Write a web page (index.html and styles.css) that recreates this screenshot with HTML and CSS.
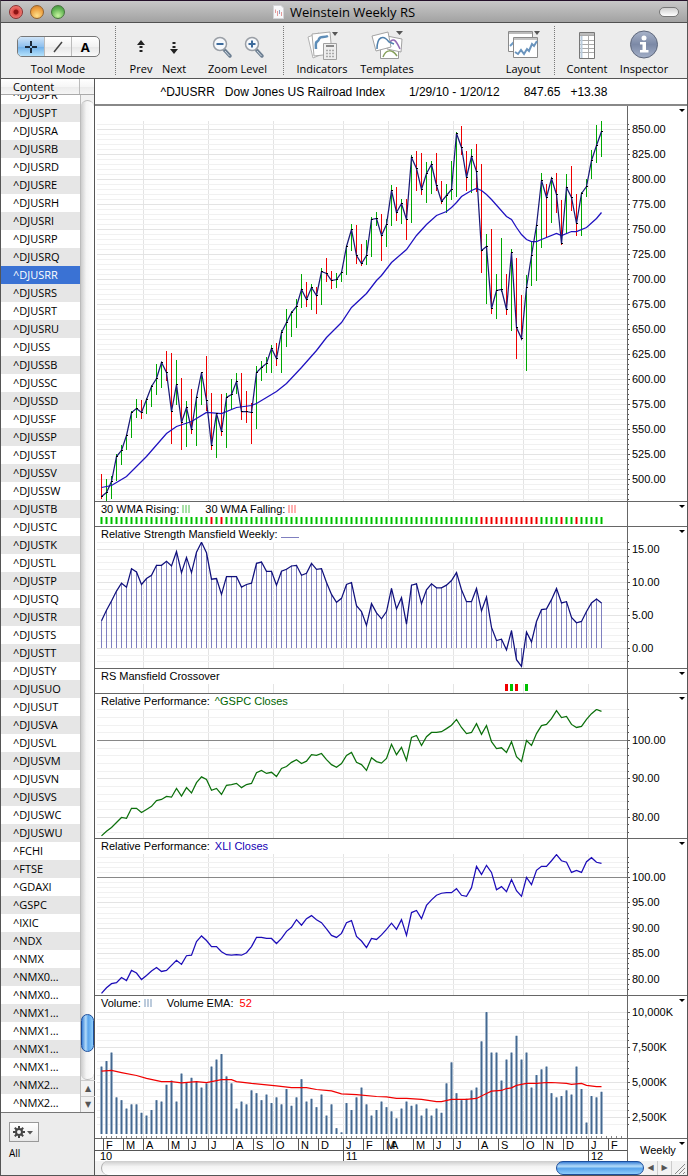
FILE: index.html
```html
<!DOCTYPE html>
<html lang="en">
  <head>
    <meta charset="UTF-8" />
    <meta name="viewport" content="width=device-width, initial-scale=1.0" />
    <title>Weinstein Weekly RS</title>
    <link rel="stylesheet" href="styles.css">
  </head>
  <body>
    <div class="window">
      <header class="titlebar">
        <div class="lights">
          <button class="light close" aria-label="Close"></button>
          <button class="light minimize" aria-label="Minimize"></button>
          <button class="light maximize" aria-label="Zoom window"></button>
        </div>
        <h1>
          <svg width="11" height="14" viewBox="0 0 11 14">
            <path d="M.5 .5H8L10.500 3V13.500H.5Z" fill="#f8f8fa" stroke="#d4d4d8" />
            <path d="M2.500 4.500V8M4.500 6V11M8.500 7V11" stroke="#e39a9a" />
            <path d="M6.500 5V9" stroke="#8e9ec4" />
          </svg>
          Weinstein Weekly RS
        </h1>
        <button class="pill" aria-label="Toggle toolbar"></button>
      </header>

      <div class="toolbar">
        <div class="tool mode">
          <div class="segments">
            <button class="active" aria-label="Crosshair">
              <svg width="12" height="12" viewBox="0 0 12 12"><path d="M6 0V5M6 7V12M0 6H5M7 6H12" stroke="#1c2a3a" stroke-width="2" /></svg>
            </button>
            <button aria-label="Line">
              <svg width="12" height="12" viewBox="0 0 12 12"><path d="M2 11L10 1" stroke="#444" stroke-width="1.500" /></svg>
            </button>
            <button>A</button>
          </div>
          <span>Tool Mode</span>
        </div>
        <div class="divider"></div>
        <button class="tool small prev">
          <svg width="20" height="28" viewBox="0 0 20 28"><path d="M6 11L10 6L14 11ZM8.500 12H11.500V14H8.500ZM8.500 16H11.500V18H8.500Z" fill="#222" /></svg>
          <span>Prev</span>
        </button>
        <button class="tool small next">
          <svg width="20" height="28" viewBox="0 0 20 28"><path d="M6 15L10 20L14 15ZM8.500 12H11.500V14H8.500ZM8.500 8H11.500V10H8.500Z" fill="#222" /></svg>
          <span>Next</span>
        </button>
        <div class="tool small zoom">
          <div class="zoom-buttons">
            <button aria-label="Zoom out">
              <svg width="22" height="28" viewBox="0 0 22 28">
                <path d="M13.500 16L19 22" stroke="#6d7f92" stroke-width="3.500" stroke-linecap="round" />
                <path d="M14 17L18.500 22" stroke="#cfd9e2" />
                <circle cx="9" cy="10" r="6.500" fill="#f7f9fc" stroke="#9a9fa6" stroke-width="1.500" />
                <path d="M5.500 10H12.500" stroke="#3d6b9c" stroke-width="2" />
              </svg>
            </button>
            <button aria-label="Zoom in">
              <svg width="22" height="28" viewBox="0 0 22 28">
                <path d="M13.500 16L19 22" stroke="#6d7f92" stroke-width="3.500" stroke-linecap="round" />
                <path d="M14 17L18.500 22" stroke="#cfd9e2" />
                <circle cx="9" cy="10" r="6.500" fill="#f7f9fc" stroke="#9a9fa6" stroke-width="1.500" />
                <path d="M5.500 10H12.500M9 6.500V13.500" stroke="#3d6b9c" stroke-width="2" />
              </svg>
            </button>
          </div>
          <span>Zoom Level</span>
        </div>
        <div class="divider"></div>
        <button class="tool indicators">
          <svg width="34" height="32" viewBox="0 0 34 32">
            <path d="M3 8L14 4L20 24L8 29Z" fill="#fff" stroke="#b2b2b2" />
            <path d="M7 5L25 3L27 25L9 27Z" fill="#fdfdfd" stroke="#a8a8a8" />
            <path d="M11 20C10 9 13 15 14 10C15 7 19 9 23 7" fill="none" stroke="#5d8db8" stroke-width="2.500" />
            <path d="M18.500 14.500H31.500V30.500H18.500Z" fill="#eee" stroke="#a0a0a0" />
            <path d="M21 17H29" stroke="#888" stroke-width="2" />
            <path d="M21 21.500H29M21 24.500H29M21 27.500H29" stroke="#aaa" stroke-width="1.500" stroke-dasharray="2 1" />
            <path d="M27 3H33L30 7Z" fill="#555" />
          </svg>
          <span>Indicators</span>
        </button>
        <button class="tool templates">
          <svg width="34" height="32" viewBox="0 0 34 32">
            <path d="M10.500 16.500H28.500V29.500H10.500Z" fill="#fff" stroke="#999" />
            <path d="M13 28C16 20 22 20 27 27" fill="none" stroke="#86a05a" stroke-width="1.500" />
            <path d="M17 7L32 10L31 23L17 20Z" fill="#fff" stroke="#a3a3a3" />
            <path d="M18 16C23 7 26 11 30 20" fill="none" stroke="#9268b4" stroke-width="1.500" />
            <path d="M2 7L18 3L21 18L6 22Z" fill="#fff" stroke="#a3a3a3" />
            <path d="M7 20C7 8 13 5 19 13L24 15" fill="none" stroke="#4f80ad" stroke-width="1.500" />
            <path d="M26 2H33L29.500 6Z" fill="#555" />
          </svg>
          <span>Templates</span>
        </button>
        <button class="tool layout">
          <svg width="34" height="32" viewBox="0 0 34 32">
            <path d="M2.500 2.500H26.500V22.500H2.500Z" fill="#fff" stroke="#8a8a8a" />
            <path d="M3 4H26" stroke="#bbb" stroke-width="2" />
            <path d="M4 17L8 13" stroke="#6d9bc6" stroke-width="2" />
            <path d="M7.500 8.500H31.500V28.500H7.500Z" fill="#fff" stroke="#8a8a8a" />
            <path d="M8 10H31" stroke="#c4c4c4" stroke-width="2" />
            <path d="M9 23L12 25L15 21L18 25L21 20L23 22L26 15L28 17L31 12" fill="none" stroke="#6a94bd" stroke-width="2" />
            <path d="M28 2H34L31 6Z" fill="#555" />
          </svg>
          <span>Layout</span>
        </button>
        <div class="divider"></div>
        <button class="tool content">
          <svg width="16" height="32" viewBox="0 0 16 32">
            <path d="M.5 3.500H15.500V29.500H.5Z" fill="#fff" stroke="#777" />
            <path d="M1 5H15" stroke="#bbb" stroke-width="2" />
            <path d="M1 6.500H15M1 11.500H15M1 15.500H15M1 19.500H15M1 23.500H15M9.500 7V29" stroke="#aaa" />
            <path d="M2.500 7V29" stroke="#bcd" stroke-width="2" />
          </svg>
          <span>Content</span>
        </button>
        <button class="tool inspector">
          <svg width="32" height="32" viewBox="0 0 32 32">
            <defs>
              <linearGradient id="info" x1="0" y1="0" x2="0" y2="1">
                <stop offset="0" stop-color="#a9b4ca" />
                <stop offset=".5" stop-color="#7c89a6" />
                <stop offset="1" stop-color="#a4b0c8" />
              </linearGradient>
            </defs>
            <circle cx="16" cy="15.500" r="13.500" fill="url(#info)" stroke="#5f687c" />
            <circle cx="16" cy="9" r="2.500" fill="#fff" />
            <path d="M12 13H18V21H20.500V23.500H12V21H14.500V15.500H12Z" fill="#fff" />
          </svg>
          <span>Inspector</span>
        </button>
      </div>

      <div class="main">
        <aside class="sidebar">
          <div class="sidebar-head"><span>Content</span></div>
          <div class="sidebar-body">
            <ul class="symbols" id="symbols"></ul>
            <div class="vscroll">
              <div class="vtrack"><div class="vthumb"></div></div>
              <button class="arrow" aria-label="Scroll up">▲</button>
              <button class="arrow" aria-label="Scroll down">▼</button>
            </div>
          </div>
          <div class="sidebar-foot">
            <button class="gear" aria-label="Actions">
              <svg width="22" height="12" viewBox="0 0 22 12">
                <circle cx="6" cy="6" r="3" fill="none" stroke="#444" stroke-width="2" />
                <path d="M6 0V2.500M6 9.500V12M0 6H2.500M9.500 6H12M1.800 1.800L3.500 3.500M8.500 8.500L10.200 10.200M1.800 10.200L3.500 8.500M8.500 3.500L10.200 1.800" stroke="#444" stroke-width="2" />
                <path d="M14 5H20L17 8.500Z" fill="#555" />
              </svg>
            </button>
            <span>All</span>
          </div>
        </aside>

        <section class="charts">
          <div class="quote">
            <span>^DJUSRR</span>
            <span>Dow Jones US Railroad Index</span>
            <span class="apart">1/29/10 - 1/20/12</span>
            <span class="apart">847.65</span>
            <span>+13.38</span>
          </div>

          <div class="panel">
            <div class="plot">
              <div class="label"></div>
              <svg id="price" height="380"></svg>
            </div>
            <div class="axis"><svg id="price-axis"></svg><button class="menu" aria-label="Price options"></button></div>
          </div>

          <div class="panel">
            <div class="plot">
              <div class="label">
                <span>30 WMA Rising: <i class="bars green"></i></span>
                <span>30 WMA Falling: <i class="bars red"></i></span>
              </div>
              <svg id="trend" height="9"></svg>
            </div>
            <div class="axis"><button class="menu" aria-label="WMA options"></button></div>
          </div>

          <div class="panel">
            <div class="plot">
              <div class="label"><span>Relative Strength Mansfield Weekly: <i class="rule"></i></span></div>
              <svg id="strength" height="126"></svg>
            </div>
            <div class="axis"><svg id="strength-axis"></svg><button class="menu" aria-label="Relative strength options"></button></div>
          </div>

          <div class="panel">
            <div class="plot">
              <div class="label">RS Mansfield Crossover</div>
              <svg id="crossover" height="9"></svg>
            </div>
            <div class="axis"><button class="menu" aria-label="Crossover options"></button></div>
          </div>

          <div class="panel">
            <div class="plot">
              <div class="label tight"><span>Relative Performance:</span> <span class="gspc">^GSPC Closes</span></div>
              <svg id="gspc" height="129"></svg>
            </div>
            <div class="axis"><svg id="gspc-axis"></svg><button class="menu" aria-label="GSPC options"></button></div>
          </div>

          <div class="panel">
            <div class="plot">
              <div class="label tight"><span>Relative Performance:</span> <span class="xli">XLI Closes</span></div>
              <svg id="xli" height="141"></svg>
            </div>
            <div class="axis"><svg id="xli-axis"></svg><button class="menu" aria-label="XLI options"></button></div>
          </div>

          <div class="panel">
            <div class="plot">
              <div class="label">
                <span>Volume: <i class="bars blue"></i></span>
                <span>Volume EMA: <b>52</b></span>
              </div>
              <svg id="volume" height="127"></svg>
            </div>
            <div class="axis"><svg id="volume-axis"></svg><button class="menu" aria-label="Volume options"></button></div>
          </div>

          <div class="panel dates">
            <div class="plot"><svg id="dates" height="22"></svg></div>
            <div class="axis"><span class="period">Weekly</span><button class="menu" aria-label="Period"></button></div>
          </div>

          <div class="hscroll">
            <div class="htrack"><div class="hthumb"></div></div>
            <button class="arrow" aria-label="Scroll left">◀</button>
            <button class="arrow" aria-label="Scroll right">▶</button>
            <svg width="15" height="14" viewBox="0 0 15 14"><path d="M3 13L13 3M7 13L13 7M11 13L13 11" stroke="#888" /></svg>
          </div>
        </section>
      </div>
    </div>
    <script src="charts.js"></script>
  </body>
</html>
```
FILE: styles.css
```css
* {
  box-sizing: border-box;
}
body {
  margin: 0;
  font-family: 'Lucida Grande', 'Open Sans', sans-serif;
  font-size: 11px;
  color: #000;
}
button {
  margin: 0;
  padding: 0;
  border: none;
  background: none;
  font: inherit;
  color: inherit;
}
svg {
  display: block;
}
.window {
  display: flex;
  flex-direction: column;
  min-height: 100vh;
  border: 1px solid #555;
  border-top-color: #24102a;
}

/* title bar */
.titlebar {
  display: grid;
  grid-template-columns: 1fr auto 1fr;
  align-items: center;
  height: 22px;
  padding: 0 8px;
  background: linear-gradient(#c8c8c8, #a2a2a2);
  border-bottom: 1px solid #515151;
}
.titlebar h1 {
  display: flex;
  align-items: center;
  gap: 6px;
  margin: 0;
  font-size: 13px;
  line-height: 16px;
  font-weight: normal;
}
.lights {
  display: flex;
  gap: 7px;
}
.light {
  width: 14px;
  height: 14px;
  border-radius: 50%;
  border: 1px solid #777;
}
.close {
  background: radial-gradient(circle at 50% 50%, #8c1414 2px, #e0504c 3px, #f59a90);
  border-color: #8a3030;
}
.minimize {
  background: radial-gradient(circle at 50% 80%, #ffe08a, #eda040 60%, #c9772c);
  border-color: #93622d;
}
.maximize {
  background: radial-gradient(circle at 50% 80%, #c8f5a0, #62b454 60%, #3f8c3c);
  border-color: #46743d;
}
.pill {
  justify-self: end;
  width: 20px;
  height: 10px;
  border: 1px solid #777;
  border-radius: 5px;
  background: linear-gradient(#cfcfcf, #fff);
}

/* toolbar */
.toolbar {
  display: flex;
  height: 56px;
  padding-right: 15px;
  background: #ececec;
  border-bottom: 1px solid #555;
}
.tool {
  display: flex;
  flex-direction: column;
  align-items: center;
  height: 54px;
  padding-top: 6px;
}
.small {
  padding-top: 11px;
}
.tool span {
  margin-top: auto;
  line-height: 16px;
  white-space: nowrap;
}
.small svg {
  margin-bottom: -3px;
}
.divider {
  width: 1px;
  margin: 3px 0;
  border-left: 1px dotted #777;
}
.mode {
  width: 114px;
}
.segments {
  display: flex;
  width: 83px;
  height: 21px;
  margin-top: 7px;
  border: 1px solid #777;
  border-radius: 5px;
  background: linear-gradient(#fff, #f2f2f2 50%, #e6e6e6 51%, #fafafa);
  overflow: hidden;
}
.segments button {
  flex: 1;
  display: flex;
  align-items: center;
  justify-content: center;
  font-size: 13px;
  font-weight: bold;
}
.segments button + button {
  border-left: 1px solid #bbb;
}
.segments .active {
  background: linear-gradient(#cfe4f8, #8fc0ee 50%, #6eaee8 51%, #b5e2fb);
}
.prev {
  width: 30px;
  margin-left: 10px;
}
.next {
  width: 32px;
  margin-left: 2px;
}
.zoom {
  width: 71px;
  margin: 0 10px 0 12px;
}
.zoom-buttons {
  display: flex;
  gap: 10px;
}
.indicators,
.templates {
  width: 60px;
  margin-left: 8px;
}
.templates {
  margin-left: 5px;
}
.layout {
  width: 46px;
  margin: 0 8px 0 auto;
}
.content {
  width: 50px;
  margin-left: 7px;
}
.inspector {
  width: 56px;
  margin-left: 4px;
}

/* symbol list */
.main {
  flex: 1;
  display: flex;
}
.sidebar {
  flex: none;
  display: flex;
  flex-direction: column;
  width: 94px;
  background: #ececec;
  border-right: 1px solid #555;
}
.sidebar-head {
  display: flex;
  height: 16px;
  line-height: 15px;
  padding-left: 12px;
  border-bottom: 1px solid #aaa;
  background: linear-gradient(#fff, #f6f6f6 50%, #ebebeb 51%, #f5f5f5);
}
.sidebar-head span {
  width: 67px;
  border-right: 1px solid #bbb;
}
.sidebar-body {
  display: flex;
  border-bottom: 1px solid #777;
}
.symbols {
  flex: 1;
  margin: 0;
  padding: 0;
  list-style: none;
  overflow: hidden;
}
.symbols li {
  height: 18px;
  padding-left: 12px;
  line-height: 18px;
  background: #fff;
}
.symbols li:first-child {
  margin-top: -9px;
}
.symbols li:nth-child(even) {
  background: #e6e6e6;
}
.symbols li.selected {
  background: #3a72d4;
  color: #fff;
}
.vscroll {
  display: flex;
  flex-direction: column;
  width: 14px;
  background: #f2f2f2;
  border-left: 1px solid #bbb;
}
.vtrack {
  flex: 1;
  display: flex;
  flex-direction: column;
  justify-content: flex-end;
  margin-top: 5px;
  padding-bottom: 27px;
  border: 1px solid #bbb;
  border-width: 1px 0;
  border-radius: 7px;
  background: linear-gradient(90deg, #ccc, #f4f4f4 40%, #fff);
}
.vthumb {
  height: 38px;
  border: 1px solid #1c4e9c;
  border-radius: 7px;
  background: linear-gradient(90deg, #3c82d8, #b4dcfa 35%, #5aa4ec 55%, #8ccdfb);
}
.arrow {
  width: 14px;
  height: 16px;
  border-top: 1px solid #ccc;
  font-family: 'DejaVu Sans', sans-serif;
  font-size: 8px;
  line-height: 14px;
  color: #555;
}
.sidebar-foot {
  display: flex;
  flex-direction: column;
  align-items: flex-start;
  padding: 9px 8px;
  gap: 3px;
}
.sidebar-foot span {
  font-size: 10px;
  line-height: 16px;
}
.gear {
  display: flex;
  align-items: center;
  justify-content: center;
  width: 30px;
  height: 20px;
  border: 1px solid #999;
  background: linear-gradient(#fff, #e8e8e8);
}

/* charts */
.charts {
  flex: 1;
  min-width: 0;
  background: #fff;
  font-family: 'Liberation Sans', Arial, sans-serif;
}
.quote {
  display: flex;
  justify-content: center;
  gap: 10px;
  height: 27px;
  padding-right: 14px;
  border-bottom: 2px solid #888;
  font-size: 12px;
  line-height: 26px;
  white-space: nowrap;
}
.apart {
  margin-left: 14px;
}
.panel {
  display: flex;
  border-bottom: 1px solid #666;
}
.plot {
  flex: 1;
  min-width: 0;
}
.plot svg {
  width: 100%;
}
.label {
  display: flex;
  gap: 15px;
  height: 15px;
  padding-left: 6px;
  line-height: 15px;
  white-space: nowrap;
}
.label.tight {
  gap: 5px;
}
.label b {
  margin-left: 3px;
  font-weight: normal;
  color: #f00;
}
.gspc {
  color: #006400;
}
.xli {
  color: #1400b4;
}
.bars {
  display: inline-block;
  width: 8px;
  height: 8px;
  background: repeating-linear-gradient(90deg, currentColor 0 2px, transparent 2px 3px);
}
.green {
  color: #a8e0a8;
}
.red {
  color: #ffb0b0;
}
.blue {
  color: #bccbdc;
}
.rule {
  display: inline-block;
  width: 18px;
  border-bottom: 1px solid #7f7fbf;
}
.axis {
  position: relative;
  flex: none;
  width: 60px;
  border-left: 1px solid #666;
}
/* takes the height of the plot beside it */
.axis svg {
  width: 59px;
  height: 0;
  min-height: 100%;
}
.axis svg,
.plot svg {
  font-size: 11px;
}
.menu {
  position: absolute;
  top: 3px;
  right: 2px;
  border: 3px solid transparent;
  border-top-color: #000;
  border-bottom: none;
}
.dates {
  border-bottom: none;
}
.period {
  display: block;
  padding-left: 12px;
  line-height: 22px;
}
.hscroll {
  display: flex;
  height: 14px;
  background: #f2f2f2;
}
.htrack {
  flex: 1;
  display: flex;
  justify-content: flex-end;
  margin-left: 6px;
  border-left: 1px solid #aaa;
  border-radius: 7px;
  background: linear-gradient(#ccc, #f4f4f4 40%, #fff);
}
.hthumb {
  width: 88px;
  border: 1px solid #1c4e9c;
  border-radius: 7px;
  background: linear-gradient(#3c82d8, #b4dcfa 35%, #5aa4ec 55%, #8ccdfb);
}
.hscroll .arrow {
  height: 14px;
  border-top: none;
  border-right: 1px solid #ccc;
}
```
FILE: charts.js
```js
const symbols = ['^DJUSPR', '^DJUSPT', '^DJUSRA', '^DJUSRB', '^DJUSRD', '^DJUSRE', '^DJUSRH', '^DJUSRI', '^DJUSRP', '^DJUSRQ', '^DJUSRR',
  '^DJUSRS', '^DJUSRT', '^DJUSRU', '^DJUSS', '^DJUSSB', '^DJUSSC', '^DJUSSD', '^DJUSSF', '^DJUSSP', '^DJUSST', '^DJUSSV', '^DJUSSW',
  '^DJUSTB', '^DJUSTC', '^DJUSTK', '^DJUSTL', '^DJUSTP', '^DJUSTQ', '^DJUSTR', '^DJUSTS', '^DJUSTT', '^DJUSTY', '^DJUSUO', '^DJUSUT',
  '^DJUSVA', '^DJUSVL', '^DJUSVM', '^DJUSVN', '^DJUSVS', '^DJUSWC', '^DJUSWU', '^FCHI', '^FTSE', '^GDAXI', '^GSPC', '^IXIC', '^NDX',
  '^NMX', '^NMX0…', '^NMX0…', '^NMX1…', '^NMX1…', '^NMX1…', '^NMX1…', '^NMX2…', '^NMX2…'];

// close, high, low, r = down week / g = up week
const prices = `483 505 481 r,487 500 479 g,498 503 481 g,523 525 499 g,529 534 515 g,544 545 530 g,567 568 542 g,571 580 562 g,567 579 561 r,580 581 566 g,
593 594 573 g,601 615 585 g,617 617 592 g,607 628 599 r,568 626 536 r,595 619 575 g,557 601 530 r,572 578 533 g,550 590 546 r,582 583 534 g,
607 607 575 g,579 623 569 r,534 586 530 r,566 566 522 g,548 585 544 r,582 586 532 g,585 600 570 g,598 606 586 g,568 606 560 r,568 588 557 r,
567 576 536 r,607 613 551 g,612 618 599 g,616 622 607 g,631 634 607 g,621 636 614 r,647 649 607 g,657 670 633 g,667 668 643 g,673 680 652 g,
690 705 672 g,680 697 673 r,692 695 670 g,684 692 666 r,708 711 675 g,706 721 698 r,699 708 691 r,700 706 692 g,707 708 698 g,733 734 705 g,
750 755 729 g,724 754 716 r,716 735 714 r,724 739 715 g,760 762 723 g,761 767 754 g,744 765 719 r,755 760 733 g,789 794 754 g,767 792 759 r,
776 780 756 g,760 780 740 r,822 824 757 g,811 828 789 r,790 826 785 r,806 817 777 g,815 818 786 g,794 826 789 r,778 798 776 r,784 795 767 g,
790 818 780 g,846 847 783 g,832 853 825 r,802 828 789 r,823 830 787 g,808 835 788 r,729 815 707 r,733 745 676 g,671 750 666 r,689 705 661 g,
690 741 688 g,670 705 665 r,727 730 649 g,652 721 621 r,641 684 640 r,692 704 609 g,724 737 694 g,754 755 699 g,799 806 732 g,782 795 743 r,
801 802 757 g,785 806 767 r,736 779 735 r,792 805 746 g,782 813 769 r,756 785 744 r,786 787 744 g,793 800 783 g,819 829 801 g,834 854 817 g,848 858 823 g`
  .split(',').map((row) => row.trim().split(' '));

// [week, value]
const average = [[0, 492], [2, 494], [5, 503], [9, 523], [13, 546], [15, 553], [18, 558], [21, 567], [24, 566], [26, 570], [27, 572], [30, 574],
  [31, 576], [33, 582], [35, 588], [37, 596], [40, 612], [43, 629], [45, 642], [48, 657], [50, 672], [53, 686], [55, 699], [56, 704], [58, 717],
  [61, 730], [63, 744], [65, 755], [67, 764], [69, 768], [70, 772], [71, 777], [72, 783], [74, 789], [75, 791], [76, 789], [77, 785], [78, 780],
  [81, 763], [82, 760], [83, 752], [84, 745], [85, 740], [86, 738], [87, 738], [88, 740], [91, 746], [92, 744], [94, 748], [95, 748], [97, 752],
  [99, 761], [100, 767]];

const strength = [4.2, 5.8, 7.2, 8.7, 9.9, 9.3, 12.1, 11.6, 9.7, 10.6, 11.1, 12.6, 12.6, 13.2, 12.5, 14.7, 11.5, 13.8, 11.5, 14.6,
  16.1, 14.5, 10.5, 10.6, 8.2, 10.9, 10.9, 10.9, 9.3, 9.7, 9.9, 12.9, 13.1, 11.7, 11.7, 9.6, 11.7, 12, 12.5, 12.6,
  11.1, 11.4, 12.9, 12, 12.1, 10, 8.2, 7, 7.6, 9.7, 10, 6.5, 5.6, 3.5, 6.8, 5.4, 4.5, 5.6, 9.1, 6,
  7.7, 3.7, 9.6, 9.8, 6.8, 8.9, 9.8, 9.2, 9.2, 9.6, 10.3, 11.5, 8.9, 7.1, 7.1, 9.1, 5.7, 7.8, 3.2, 1.2,
  1.4, -0.2, 2.7, -1.7, -2.7, 2.5, 1, 4.1, 5.9, 6, 7.4, 9.1, 6.9, 7.1, 4.7, 3.9, 4.1, 5.6, 6.9, 7.5, 6.9];

const gspc = [75.1, 76.3, 77.3, 78.6, 79.9, 79.7, 82.3, 82.3, 81.2, 82, 82.8, 84.3, 84.6, 85.4, 85.2, 87.5, 85.5, 87.7, 86.3, 89,
  90.5, 89.8, 87, 87.5, 85.9, 88.3, 88.5, 88.8, 87.7, 88.5, 88.8, 91.6, 92.2, 91.4, 91.7, 90.6, 92.7, 93.2, 94.3, 95,
  94, 94.6, 96.3, 96.1, 96.6, 95, 93.7, 93, 94, 96.1, 96.9, 94.3, 93.7, 92.2, 95.5, 94.5, 94.1, 95.3, 99, 96.3,
  98.2, 94.8, 100.8, 101.3, 98.7, 101, 102.1, 102.1, 102.3, 103.1, 104, 105.5, 103.4, 101.8, 102.1, 104.4, 101.6, 103.9, 99.7, 97.9,
  98.1, 96.9, 99.7, 95.8, 94.5, 100, 98.7, 101.8, 103.9, 104.2, 105.7, 107.8, 106, 106.3, 104.2, 103.4, 103.7, 105.5, 107, 108.1, 107.6];

const xli = [77.2, 78.3, 79.1, 79.3, 80.3, 79.7, 81.7, 81.2, 79.9, 80.7, 81.6, 82.3, 81.5, 81.7, 82.7, 83.7, 82.9, 84.6, 84.7, 87.4,
  88.5, 87.6, 86.4, 86.4, 85.4, 84.8, 84.7, 84.8, 84.7, 85.2, 86.4, 88.2, 88.2, 88, 88, 87, 88, 89.4, 90.2, 91.7,
  90.6, 91.9, 92.5, 91.7, 91.1, 89.9, 88.6, 88.2, 89, 91.1, 91.5, 88.4, 87.5, 86.2, 88, 87.8, 88.7, 89.8, 91, 89.8,
  91.7, 88.6, 93.1, 93.5, 91.9, 94.5, 95.6, 96.5, 96.9, 97, 97, 97.8, 96.5, 96.3, 98, 102.2, 100.6, 102.4, 101, 97.6,
  98.2, 97.2, 99.6, 97.4, 96.3, 100, 98.6, 101.4, 102.2, 102.2, 103.3, 104.5, 103.3, 103, 101, 101.4, 101, 103.1, 103.9, 103, 102.8];

// millions
const volume = [6.1, 6.5, 7.1, 3.9, 3.7, 3.1, 3.4, 3.4, 2.8, 2.6, 3, 3.7, 3.6, 4.8, 5.1, 3.6, 5.6, 5, 5.3, 5,
  4.6, 4.9, 6.1, 6.6, 7, 5.4, 4.9, 3.1, 3.6, 3.4, 4.4, 4.2, 3.7, 4.1, 3.5, 3.9, 3.4, 4.5, 3.3, 3.9,
  5.2, 3.6, 3.8, 3.2, 4.1, 2.6, 3.4, 1.7, 1.4, 3.5, 3, 3.9, 4.6, 3.4, 2.6, 3, 3.6, 3.2, 2.9, 2.4,
  3.1, 3.6, 3.3, 3.4, 2.6, 3.1, 2.6, 3.1, 2.8, 4.9, 6.4, 4.2, 3.7, 3.8, 4.4, 4.6, 7.9, 10, 7.1, 7.1,
  5.1, 6.6, 7.1, 8.3, 6.6, 7.1, 4.6, 5.5, 5.9, 6.1, 4.2, 3.9, 4, 4.4, 4.1, 6.1, 4.5, 2.1, 4, 3.9, 4.3];
const volumeAverage = [[0, 5.81], [2, 5.86], [4, 5.71], [7, 5.5], [9, 5.29], [12, 5.07], [14, 5.07], [16, 4.98], [19, 5.07], [21, 5], [24, 5.21],
  [26, 5.21], [27, 5.07], [30, 4.93], [35, 4.76], [38, 4.64], [41, 4.64], [43, 4.5], [46, 4.4], [48, 4.19], [51, 4.14], [55, 4], [57, 3.98],
  [59, 3.86], [61, 3.86], [64, 3.79], [67, 3.64], [68, 3.64], [70, 3.79], [73, 3.79], [75, 3.86], [77, 4.21], [78, 4.38], [80, 4.43], [81, 4.57],
  [82, 4.62], [83, 4.79], [85, 4.93], [87, 4.93], [89, 5], [90, 5], [93, 4.93], [94, 4.86], [96, 4.93], [97, 4.79], [99, 4.71], [100, 4.71]];

const falling = [22, 24, 76, 77, 78, 79, 80, 81, 82, 83, 84, 85, 86, 87, 92, 95];
const crossings = [[81, 'r'], [82, 'g'], [83, 'r'], [85, 'g']];

const monthNames = 'FMAMJJASONDJFMAMJJASONDJF';
const monthWeeks = [0, 4, 8, 13, 17, 21, 26, 30, 34, 39, 43, 48, 52, 56, 57, 62, 66, 70, 75, 79, 84, 88, 92, 97, 101];
const quarters = [8, 21, 34, 48, 57, 70, 84, 97];
const labelHeight = 15;

document.getElementById('symbols').innerHTML = symbols
  .map((name) => `<li${name === '^DJUSRR' ? ' class="selected"' : ''}>${name}</li>`)
  .join('');

function draw() {
  const width = document.getElementById('price').clientWidth;
  const scale = width / 532;
  const x = (week) => Math.round((6 + week * 5) * scale) + 0.5;
  const monthX = (week) => Math.round((8 + week * 5) * scale) + 0.5;

  const line = (x1, y1, x2, y2, color, w = 1) =>
    `<line x1="${x1}" y1="${y1}" x2="${x2}" y2="${y2}" stroke="${color}" stroke-width="${w}" />`;
  const curve = (points, y, color, w = 1.25) =>
    `<polyline points="${points.map(([i, v]) => x(i) + ',' + (y(v) + 0.5)).join(' ')}" fill="none" stroke="${color}" stroke-width="${w}" />`;
  const indexed = (values) => values.map((v, i) => [i, v]);
  const put = (id, html) => (document.getElementById(id).innerHTML = html);

  const verticals = (height) => quarters.map((q) => line(monthX(q), 0, monthX(q), height, '#e4e4e4')).join('');

  // horizontal grid in the plot and matching ticks and figures in the axis
  function grid(id, opts, y) {
    const height = Number(document.getElementById(id).getAttribute('height'));
    let plot = '';
    let axis = '';
    for (let n = opts.from; n <= opts.to; n++) {
      const value = n * opts.minor;
      const major = n % opts.every === 0;
      const py = Math.round(y(value)) + 0.5;
      plot += line(2, py, width, py, value === opts.base ? '#888' : major ? '#e4e4e4' : '#f1f1f1');
      axis += line(0, py + labelHeight, major ? 2 : 1, py + labelHeight, '#555');
      if (major) axis += `<text x="4" y="${py + labelHeight + 3.5}">${opts.format(value)}</text>`;
    }
    put(id + '-axis', axis);
    return verticals(height) + plot;
  }
  const fixed = (v) => v.toFixed(2);

  // price
  let y = (v) => 858 - v;
  let out = grid('price', { from: 96, to: 171, minor: 5, every: 5, format: fixed }, y);
  prices.forEach(([, high, low, dir], i) => {
    out += line(x(i), y(high), x(i), y(low) + 1, dir === 'r' ? '#f00000' : '#00aa00');
  });
  out += curve(average, y, '#1e10c0');
  out += curve(prices.map((p, i) => [i, p[0]]), y, '#1a1a78');
  prices.forEach(([close], i) => {
    out += line(x(i) - 0.5, y(close) + 0.5, x(i) + 1.5, y(close) + 0.5, '#000');
  });
  put('price', out);

  // average direction
  out = '';
  for (let i = 0; i <= 100; i++) {
    const down = falling.includes(i);
    out += line(x(i), 0, x(i), 7, down ? '#ff8080' : '#78e678', 3);
    out += line(x(i), 0, x(i), 7, down ? '#e80000' : '#00b800');
  }
  put('trend', out);

  // relative strength
  y = (v) => 106 - v * 6.6;
  out = grid('strength', { from: -2, to: 16, minor: 1, every: 5, format: fixed }, y);
  strength.forEach((v, i) => (out += line(x(i), y(v), x(i), y(0), '#8080c0')));
  out += curve(indexed(strength), y, '#10107c');
  put('strength', out);

  put('crossover', verticals(9) + crossings.map(([i, dir]) => line(x(i), 0, x(i), 7, dir === 'r' ? '#f00000' : '#00c000', 3)).join(''));

  // relative performance
  y = (v) => 31 - (v - 100) * 3.83;
  put('gspc', grid('gspc', { from: 38, to: 54, minor: 2, every: 5, base: 100, format: fixed }, y) + curve(indexed(gspc), y, '#0c700c'));

  y = (v) => 23 - (v - 100) * 5.08;
  put('xli', grid('xli', { from: 78, to: 104, minor: 1, every: 5, base: 100, format: fixed }, y) + curve(indexed(xli), y, '#1c0cb8'));

  // volume
  y = (v) => 1 + (10 - v) * 14;
  out = grid('volume', { from: 4, to: 20, minor: 0.5, every: 5, format: (v) => (v * 1000).toLocaleString('en-US') + 'K' }, y);
  volume.forEach((v, i) => {
    out += line(x(i), y(v), x(i), 123, '#9db3c9', 3);
    out += line(x(i), y(v), x(i), 123, '#456890');
  });
  out += curve(volumeAverage, y, '#f00000');
  for (let i = 0; i < 105; i++) out += line(x(i), 125, x(i), 127, '#888');
  put('volume', out);

  // months and years
  out = line(0, 11.5, width, 11.5, '#555');
  monthWeeks.forEach((week, i) => {
    out += line(monthX(week), 0, monthX(week), 11, '#555');
    out += `<text x="${monthX(week) + 2.5}" y="10">${monthNames[i]}</text>`;
  });
  [[48, '11'], [97, '12']].forEach(([week, year]) => {
    out += line(monthX(week), 0, monthX(week), 22, '#555');
    out += `<text x="${monthX(week) + 2.5}" y="21">${year}</text>`;
  });
  out += '<text x="5" y="21">10</text>';
  put('dates', out);
}

draw();
window.addEventListener('resize', draw);
```
